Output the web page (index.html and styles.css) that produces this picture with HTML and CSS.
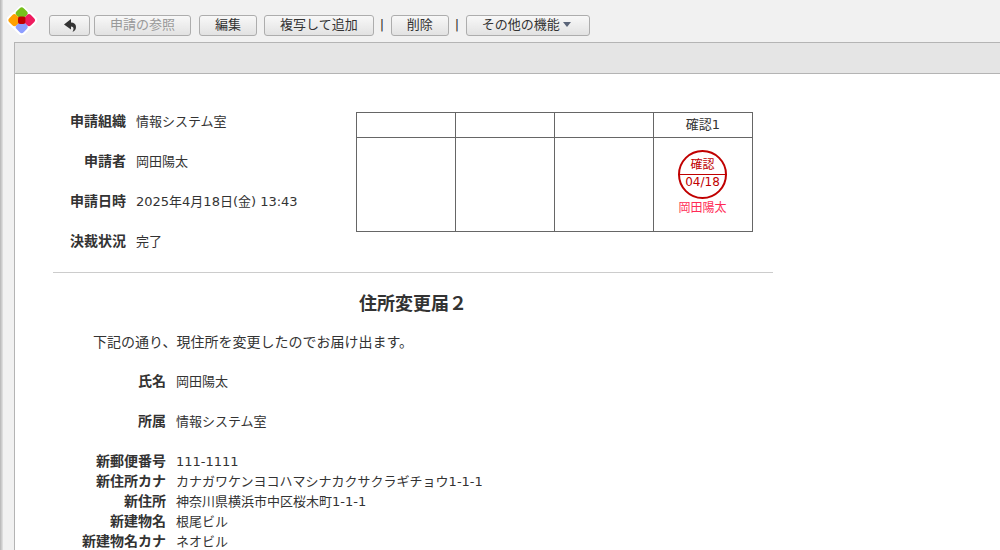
FILE: index.html
```html
<!DOCTYPE html>
<html lang="ja">
<head>
<meta charset="utf-8">
<title>住所変更届</title>
<link rel="stylesheet" href="styles.css">
</head>
<body>
<div class="shadow"></div>
<div class="main">
  <header class="toolbar">
    <svg class="logo" width="30" height="30" viewBox="7 5 30 30">
      <rect x="14.800" y="6.800" width="13.800" height="13.800" rx="3.500" transform="rotate(45 21.700 13.700)" fill="#fff"/>
      <rect x="22.100" y="13.300" width="13.800" height="13.800" rx="3.500" transform="rotate(45 29 20.200)" fill="#fff"/>
      <rect x="14.800" y="20.300" width="13.800" height="13.800" rx="3.500" transform="rotate(45 21.700 27.200)" fill="#fff"/>
      <rect x="7.500" y="13.300" width="13.800" height="13.800" rx="3.500" transform="rotate(45 14.400 20.200)" fill="#fff"/>
      <rect x="16.700" y="8.300" width="10" height="10" rx="2.800" transform="rotate(45 21.700 13.300)" fill="#76c01b"/>
      <rect x="24" y="15.200" width="10" height="10" rx="2.800" transform="rotate(45 29 20.200)" fill="#ee1c5f"/>
      <rect x="16.700" y="22.100" width="10" height="10" rx="2.800" transform="rotate(45 21.700 27.100)" fill="#8d9dff"/>
      <rect x="9.400" y="15.200" width="10" height="10" rx="2.800" transform="rotate(45 14.400 20.200)" fill="#ffa000"/>
      <rect x="18" y="16.500" width="7.400" height="7.400" rx="2" fill="#c00000"/>
    </svg>
    <button class="btn btn-back" aria-label="戻る">
      <svg width="12" height="13" viewBox="0 0 12 13"><path d="M7 0 0 5.500 7 10.500V7.500C9 7.500 9.500 8.500 9.500 10 9.500 11 9 12 8.500 13 11 12 12 10 12 8 12 5 10 3.500 7 3.500Z" fill="#333"/></svg>
    </button>
    <button class="btn btn-off">申請の参照</button>
    <button class="btn">編集</button>
    <button class="btn">複写して追加</button>
    <span class="sep">|</span>
    <button class="btn">削除</button>
    <span class="sep">|</span>
    <button class="btn">その他の機能<span class="caret"></span></button>
  </header>
  <div class="band"></div>
  <div class="content">
    <section class="head">
      <dl class="meta">
        <div class="row"><dt>申請組織</dt><dd>情報システム室</dd></div>
        <div class="row"><dt>申請者</dt><dd>岡田陽太</dd></div>
        <div class="row"><dt>申請日時</dt><dd>2025年4月18日(金) 13:43</dd></div>
        <div class="row"><dt>決裁状況</dt><dd>完了</dd></div>
      </dl>
      <table class="approval">
        <tr class="titles"><td></td><td></td><td></td><td>確認1</td></tr>
        <tr class="stamps"><td></td><td></td><td></td>
          <td>
            <div class="stamp"><span class="stamp-top">確認</span><span class="stamp-date">04/18</span></div>
            <div class="stamp-name">岡田陽太</div>
          </td>
        </tr>
      </table>
    </section>
    <hr class="rule">
    <h1 class="title">住所変更届２</h1>
    <p class="lead">下記の通り、現住所を変更したのでお届け出ます。</p>
    <dl class="form">
      <div class="row"><dt>氏名</dt><dd>岡田陽太</dd></div>
      <div class="row"><dt>所属</dt><dd>情報システム室</dd></div>
    </dl>
    <dl class="form tight">
      <div class="row"><dt>新郵便番号</dt><dd>111-1111</dd></div>
      <div class="row"><dt>新住所カナ</dt><dd>カナガワケンヨコハマシナカクサクラギチョウ1-1-1</dd></div>
      <div class="row"><dt>新住所</dt><dd>神奈川県横浜市中区桜木町1-1-1</dd></div>
      <div class="row"><dt>新建物名</dt><dd>根尾ビル</dd></div>
      <div class="row"><dt>新建物名カナ</dt><dd>ネオビル</dd></div>
    </dl>
  </div>
</div>
</body>
</html>
```
FILE: styles.css
```css
* { box-sizing: border-box; }
html, body { margin: 0; height: 550px; overflow: hidden; }
body {
  display: flex;
  background: #f1f1f1;
  color: #333;
  font: 13px/20px "DejaVu Sans", "Noto Sans CJK JP", sans-serif;
}
.shadow {
  width: 3px;
  flex: none;
  background: linear-gradient(to right, #b4b4b4, #e4e4e4);
}
.main { flex: 1; min-width: 0; display: flex; flex-direction: column; }
.toolbar {
  height: 42px;
  flex: none;
  display: flex;
  align-items: flex-start;
  padding: 15px 0 0 4px;
}
.logo { flex: none; margin: -10px 12px 0 0; }
.btn {
  height: 21px;
  padding: 0 15px 1px;
  margin-right: 7px;
  border: 1px solid #adadad;
  border-radius: 3px;
  background: linear-gradient(to bottom, #f8f8f8, #e2e2e2);
  color: #333;
  font: inherit;
  line-height: 18px;
  white-space: nowrap;
}
.btn-back { width: 41px; padding: 0; margin-right: 4px; display: flex; align-items: center; justify-content: center; }
.btn-off { color: #999; margin-right: 8px; }
.sep { width: 11px; margin-left: -1px; flex: none; line-height: 20px; }
.caret {
  display: inline-block;
  margin: 0 3px 0 3px;
  vertical-align: 2px;
  border: 4.5px solid transparent;
  border-top: 5px solid #5a6478;
  border-bottom: 0;
}
.band {
  height: 32px;
  flex: none;
  margin-left: 11px;
  background: #e5e5e5;
  border: 1px solid #b4b4b4;
  border-right: 0;
}
.content {
  flex: 1;
  margin-left: 11px;
  background: #fff;
  border-left: 1px solid #b4b4b4;
  padding: 38px 0 0 38px;
}
.head { display: flex; width: 720px; }
dl { margin: 0; }
dt { font-weight: 700; font-size: 14px; line-height: 18px; text-align: right; flex: none; }
dd { margin: 0; }
.row { display: flex; gap: 10px; }
.meta { width: 303px; flex: none; }
.meta dt { width: 73px; }
.meta .row { height: 40px; }
.approval {
  border-collapse: collapse;
  height: 120px;
  table-layout: fixed;
  width: 397px;
  align-self: flex-start;
}
.approval td { border: 1px solid #666; width: 99px; text-align: center; padding: 0; }
.titles td { height: 25px; }
.stamps td { height: 94px; vertical-align: top; padding: 12px 1px 0 0; }
.stamp {
  width: 49px;
  height: 49px;
  margin: 0 auto;
  border: 2px solid #c00000;
  border-radius: 50%;
  color: #c00000;
  display: flex;
  flex-direction: column;
  font-size: 12px;
  line-height: 20px;
}
.stamp-top { height: 23px; flex: none; border-bottom: 1px solid #c00000; line-height: 26px; }
.stamp-date { line-height: 14px; }
.stamp-name { color: #ff2a55; font-size: 12px; line-height: 16px; margin-top: 1px; }
.rule { width: 720px; margin: 0; border: 0; border-top: 1px solid #ccc; }
.title { width: 720px; margin: 20px 0 0; font-size: 18px; line-height: 22px; text-align: center; }
.lead { margin: 17px 0 0 40px; font-size: 14px; line-height: 20px; }
.form { margin-top: 20px; }
.form dt { width: 113px; }
.form .row { height: 40px; }
.form.tight { margin-top: 0; }
.form.tight .row { height: 20px; }
```
